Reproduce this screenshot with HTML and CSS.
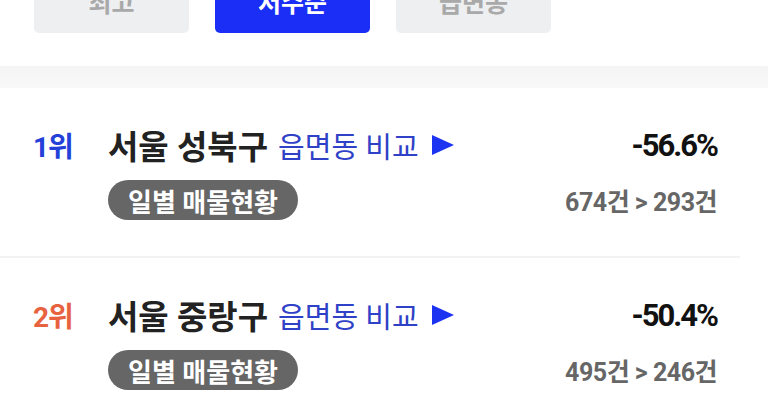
FILE: index.html
```html
<!DOCTYPE html>
<html lang="ko">
<head>
<meta charset="utf-8">
<link rel="stylesheet" href="styles.css">
</head>
<body>
<div class="tabs">
  <div class="tab">최고</div>
  <div class="tab active">저수준</div>
  <div class="tab">급변동</div>
</div>
<div class="band"></div>
<div class="list">
  <div class="row">
    <div class="rank r1">1위</div>
    <div class="title"><span class="name">서울 성북구</span><span class="link">읍면동 비교</span><svg class="tri" viewBox="0 0 24 22" width="24" height="22"><polygon points="1,1 23,11 1,21" fill="#1d33f2"/></svg></div>
    <div class="pct">-56.6%</div>
    <div class="pillcell"><span class="pill">일별 매물현황</span></div>
    <div class="count">674건 &gt; 293건</div>
  </div>
  <div class="sep"></div>
  <div class="row">
    <div class="rank r2">2위</div>
    <div class="title"><span class="name">서울 중랑구</span><span class="link">읍면동 비교</span><svg class="tri" viewBox="0 0 24 22" width="24" height="22"><polygon points="1,1 23,11 1,21" fill="#1d33f2"/></svg></div>
    <div class="pct">-50.4%</div>
    <div class="pillcell"><span class="pill">일별 매물현황</span></div>
    <div class="count">495건 &gt; 246건</div>
  </div>
</div>
</body>
</html>
```

FILE: styles.css
```css
html, body {
  margin: 0;
  padding: 0;
  background: #ffffff;
  overflow: hidden;
}
body {
  width: 768px;
  height: 403px;
  font-family: "Roboto", "Noto Sans CJK KR", sans-serif;
}
.tabs {
  display: flex;
  gap: 26px;
  padding-left: 34px;
  margin-top: -23px;
}
.tab {
  width: 155px;
  height: 56px;
  box-sizing: border-box;
  padding-bottom: 9px;
  border-radius: 5px;
  background: #eeeff1;
  color: #a9a9a9;
  font-size: 25px;
  font-weight: 700;
  display: flex;
  align-items: center;
  justify-content: center;
}
.tab.active {
  background: #1a2ef5;
  color: #ffffff;
}
.band {
  margin-top: 33px;
  height: 22px;
  background: linear-gradient(#f4f4f4, #f8f8f8);
}
.row {
  display: grid;
  grid-template-columns: 75px 1fr auto;
  grid-template-rows: 40px 40px;
  row-gap: 15px;
  padding: 37px 51px 36px 33px;
  align-items: center;
}
.rank {
  font-size: 28px;
  font-weight: 700;
  letter-spacing: -1px;
}
.r1 { color: #2340d8; }
.r2 { color: #e8623f; }
.title {
  display: flex;
  align-items: center;
}
.name {
  font-size: 33px;
  font-weight: 700;
  color: #222222;
}
.link {
  font-size: 29px;
  color: #2f41c6;
  margin-left: 10px;
}
.tri {
  margin-left: 12px;
}
.pct {
  justify-self: end;
  font-size: 31px;
  font-weight: 700;
  color: #111111;
  letter-spacing: -2px;
}
.pillcell {
  grid-column: 2;
}
.pill {
  display: inline-flex;
  align-items: center;
  height: 40px;
  padding: 0 20px;
  border-radius: 20px;
  background: #666666;
  color: #ffffff;
  font-size: 26px;
  font-weight: 700;
}
.count {
  justify-self: end;
  font-size: 25px;
  font-weight: 700;
  color: #666666;
  letter-spacing: -0.5px;
}
.sep {
  height: 2px;
  margin-right: 28px;
  background: #f3f3f3;
}
```
